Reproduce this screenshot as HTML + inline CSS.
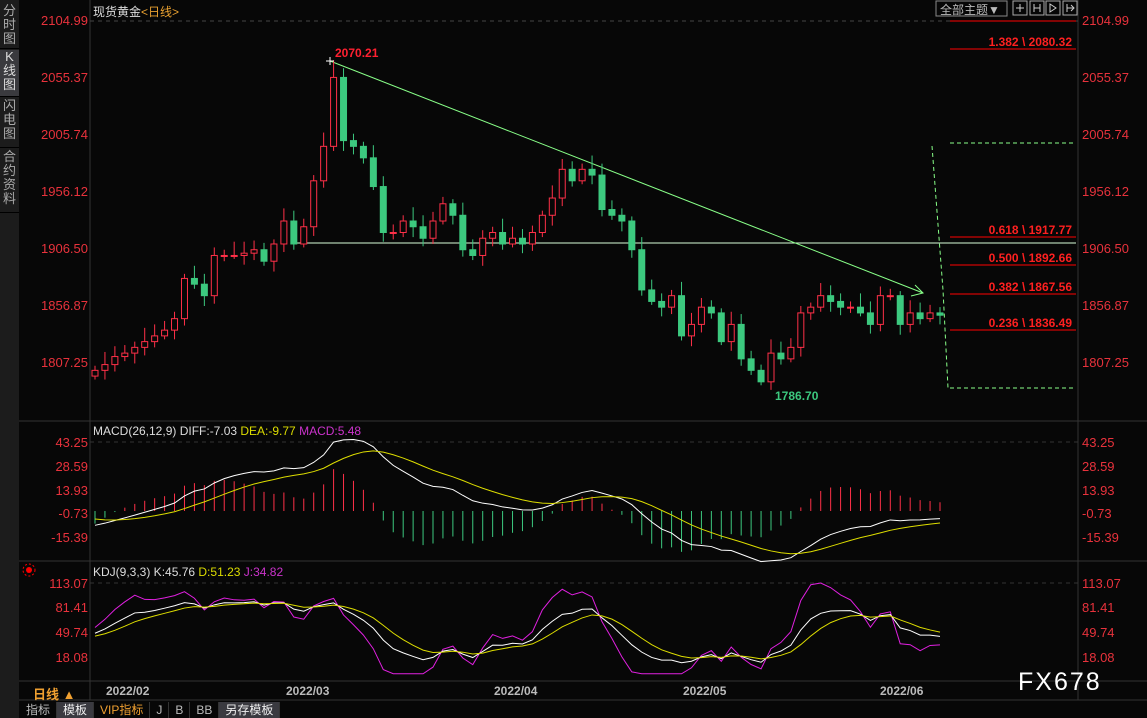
<!DOCTYPE html>
<html><head><meta charset="utf-8"><style>
html,body{margin:0;padding:0;background:#070707;overflow:hidden}
body{width:1147px;height:718px;position:relative;font-family:"Liberation Sans","Noto Sans CJK SC",sans-serif}
.side{position:absolute;left:0;top:0;width:19px;height:718px;background:#1c1c1c}
.side div{position:absolute;left:0;width:19px;color:#aaa;font-size:13px;line-height:14px;text-align:center;border-bottom:1px solid #000}
.t{position:absolute;white-space:nowrap}
.ax{position:absolute;color:#e8323c;font-size:13px;text-align:right;width:68px}
.rax{position:absolute;color:#e8323c;font-size:13px;left:1082px}
.fib{position:absolute;color:#ff2020;font-size:12px;font-weight:bold;right:75px}
.tabs{position:absolute;left:20px;top:702px;height:16px;font-size:12px;color:#bbb}
.tabs span{display:inline-block;height:16px;line-height:16px;padding:0 6px;border-right:1px solid #333}
</style></head><body>
<div class="side">
<div style="top:4px;height:44px">分<br>时<br>图</div>
<div style="top:50px;height:46px;background:#3a3a3e;color:#ddd">K<br>线<br>图</div>
<div style="top:99px;height:48px">闪<br>电<br>图</div>
<div style="top:150px;height:62px">合<br>约<br>资<br>料</div>
</div>
<svg id="s" width="1147" height="718" style="position:absolute;left:0;top:0">
<line x1="90" y1="0" x2="90" y2="700" stroke="#333"/>
<line x1="1078" y1="0" x2="1078" y2="700" stroke="#333"/>
<line x1="19" y1="421" x2="1147" y2="421" stroke="#333"/>
<line x1="19" y1="561" x2="1147" y2="561" stroke="#333"/>
<line x1="19" y1="681" x2="1147" y2="681" stroke="#333"/>
<line x1="19" y1="700" x2="1147" y2="700" stroke="#333"/>
<line x1="90" y1="21" x2="1078" y2="21" stroke="#444" stroke-dasharray="4,4"/>
<line x1="90" y1="442" x2="1078" y2="442" stroke="#333" stroke-dasharray="4,4"/>
<line x1="90" y1="583" x2="1078" y2="583" stroke="#333" stroke-dasharray="4,4"/>
<line x1="950" y1="21" x2="1076" y2="21" stroke="#f00"/>
<line x1="950" y1="49" x2="1076" y2="49" stroke="#f00"/>
<line x1="950" y1="237" x2="1076" y2="237" stroke="#f00"/>
<line x1="950" y1="265" x2="1076" y2="265" stroke="#f00"/>
<line x1="950" y1="294" x2="1076" y2="294" stroke="#f00"/>
<line x1="950" y1="330" x2="1076" y2="330" stroke="#f00"/>
<line x1="950" y1="143" x2="1076" y2="143" stroke="#8f8" stroke-dasharray="4,3"/>
<line x1="950" y1="388" x2="1076" y2="388" stroke="#8f8" stroke-dasharray="4,3"/>
<polyline points="932,146 943,290 948,388" fill="none" stroke="#8f8" stroke-dasharray="4,3"/>
<line x1="293" y1="243" x2="1076" y2="243" stroke="#d8ffd8"/>
<line x1="330" y1="61" x2="923" y2="293" stroke="#8f8"/>
<polyline points="915,285 923,293 911,296" fill="none" stroke="#8f8"/>
<g id="c"></g><g id="m"></g><g id="k"></g>
<line x1="326" y1="61" x2="334" y2="61" stroke="#fff"/><line x1="330" y1="57" x2="330" y2="65" stroke="#fff"/>
<circle cx="29" cy="570" r="3" fill="#f00"/><circle cx="29" cy="570" r="6" fill="none" stroke="#f00" stroke-dasharray="2,2"/>
<rect x="936" y="1" width="71" height="15" fill="none" stroke="#888"/>
<rect x="1013" y="1" width="14" height="14" fill="none" stroke="#aaa"/>
<rect x="1030" y="1" width="14" height="14" fill="none" stroke="#aaa"/>
<rect x="1046" y="1" width="14" height="14" fill="none" stroke="#aaa"/>
<rect x="1063" y="1" width="14" height="14" fill="none" stroke="#aaa"/>
<path d="M1020 4v8M1016 8h8M1034 4v8M1040 4v8M1034 8h6M1050 4v8l6-4z M1067 4v8M1067 8h7M1071 5l3 3-3 3" stroke="#ccc" fill="none"/>
</svg>
<div class="t" style="left:93px;top:3px;font-size:12px;color:#ddd">现货黄金<span style="color:#e8a030">&lt;日线&gt;</span></div>
<div class="t" style="left:940px;top:1px;font-size:12px;color:#bbb">全部主题▼</div>
<div class="ax" style="left:20px;top:13px">2104.99</div>
<div class="ax" style="left:20px;top:70px">2055.37</div>
<div class="ax" style="left:20px;top:127px">2005.74</div>
<div class="ax" style="left:20px;top:184px">1956.12</div>
<div class="ax" style="left:20px;top:241px">1906.50</div>
<div class="ax" style="left:20px;top:298px">1856.87</div>
<div class="ax" style="left:20px;top:355px">1807.25</div>
<div class="rax" style="top:13px">2104.99</div>
<div class="rax" style="top:70px">2055.37</div>
<div class="rax" style="top:127px">2005.74</div>
<div class="rax" style="top:184px">1956.12</div>
<div class="rax" style="top:241px">1906.50</div>
<div class="rax" style="top:298px">1856.87</div>
<div class="rax" style="top:355px">1807.25</div>
<div class="fib" style="top:35px">1.382 \ 2080.32</div>
<div class="fib" style="top:223px">0.618 \ 1917.77</div>
<div class="fib" style="top:251px">0.500 \ 1892.66</div>
<div class="fib" style="top:280px">0.382 \ 1867.56</div>
<div class="fib" style="top:316px">0.236 \ 1836.49</div>
<div class="t" style="left:335px;top:46px;color:#ff2030;font-size:12px;font-weight:bold">2070.21</div>
<div class="t" style="left:775px;top:389px;color:#3cc97f;font-size:12px;font-weight:bold">1786.70</div>
<div class="t" style="left:93px;top:424px;font-size:12px;color:#ddd">MACD(26,12,9) DIFF:-7.03 <span style="color:#dd0">DEA:-9.77</span> <span style="color:#c3c">MACD:5.48</span></div>
<div class="ax" style="left:20px;top:435px">43.25</div><div class="ax" style="left:20px;top:459px">28.59</div><div class="ax" style="left:20px;top:483px">13.93</div><div class="ax" style="left:20px;top:506px">-0.73</div><div class="ax" style="left:20px;top:530px">-15.39</div>
<div class="rax" style="top:435px">43.25</div><div class="rax" style="top:459px">28.59</div><div class="rax" style="top:483px">13.93</div><div class="rax" style="top:506px">-0.73</div><div class="rax" style="top:530px">-15.39</div>
<div class="t" style="left:93px;top:565px;font-size:12px;color:#ddd">KDJ(9,3,3) K:45.76 <span style="color:#dd0">D:51.23</span> <span style="color:#c3c">J:34.82</span></div>
<div class="ax" style="left:20px;top:576px">113.07</div><div class="ax" style="left:20px;top:600px">81.41</div><div class="ax" style="left:20px;top:625px">49.74</div><div class="ax" style="left:20px;top:650px">18.08</div>
<div class="rax" style="top:576px">113.07</div><div class="rax" style="top:600px">81.41</div><div class="rax" style="top:625px">49.74</div><div class="rax" style="top:650px">18.08</div>
<div class="t" style="left:33px;top:684px;color:#f0a030;font-size:13px;font-weight:bold">日线 ▲</div>
<div class="t" style="left:106px;top:684px;color:#bbb;font-size:12px;font-weight:bold">2022/02</div>
<div class="t" style="left:286px;top:684px;color:#bbb;font-size:12px;font-weight:bold">2022/03</div>
<div class="t" style="left:494px;top:684px;color:#bbb;font-size:12px;font-weight:bold">2022/04</div>
<div class="t" style="left:683px;top:684px;color:#bbb;font-size:12px;font-weight:bold">2022/05</div>
<div class="t" style="left:880px;top:684px;color:#bbb;font-size:12px;font-weight:bold">2022/06</div>
<div class="t" style="left:1018px;top:668px;color:#fff;font-size:25px;letter-spacing:2px">FX678</div>
<div class="tabs"><span>指标</span><span style="background:#3a3a40;color:#eee">模板</span><span style="color:#f0a030">VIP指标</span><span>J</span><span>B</span><span>BB</span><span style="background:#3a3a40;color:#eee">另存模板</span></div>
<script>
var cl=[1800,1805,1812,1815,1820,1825,1830,1835,1845,1880,1875,1865,1900,1900,1900,1902,1905,1895,1910,1930,1910,1925,1965,1995,2055,2000,1995,1985,1960,1920,1920,1930,1925,1915,1930,1945,1935,1905,1900,1915,1920,1910,1915,1910,1920,1935,1950,1975,1965,1975,1970,1940,1935,1930,1905,1870,1860,1855,1865,1830,1840,1855,1850,1825,1840,1810,1800,1790,1815,1810,1820,1850,1855,1865,1860,1855,1855,1850,1840,1865,1865,1840,1850,1845,1850,1848];
var N=cl.length,x0=95,dx=(940-95)/(N-1);
function py(p){return 20+(2104.99-p)*1.1487}
var ns="http://www.w3.org/2000/svg";
function el(g,t,a){var e=document.createElementNS(ns,t);for(var k in a)e.setAttribute(k,a[k]);document.getElementById(g).appendChild(e)}
var hi=[],lo=[];
for(var i=0;i<N;i++){var o=i?cl[i-1]:1795,c=cl[i];if(i==24)o=1995;var h=Math.max(o,c)+4+((i*7)%9),l=Math.min(o,c)-3-((i*5)%7);
if(i==24)h=2070;if(i==67)l=1787;hi.push(h);lo.push(l);
var x=x0+i*dx,up=c>=o,col=up?"#ff3048":"#3cc97f";
el("c","line",{x1:x,x2:x,y1:py(h),y2:py(l),stroke:col});
var y1=py(Math.max(o,c)),y2=py(Math.min(o,c));if(y2-y1<1)y2=y1+1;
el("c","rect",{x:x-3,y:y1,width:6,height:y2-y1,fill:up?"#070707":col,stroke:col});}
function ema(a,n,s){var r=[],k=2/(n+1);a.forEach(function(v,i){r.push(i?r[i-1]+k*(v-r[i-1]):s+k*(v-s))});return r}
var e12=ema(cl,12,1796),e26=ema(cl,26,1806),dif=cl.map(function(v,i){return e12[i]-e26[i]}),dea=ema(dif,9,-4);
function my(v){return 511-v*1.6}
var dp="",dp2="";for(i=0;i<N;i++){var x=x0+i*dx;dp+=x+","+my(dif[i])+" ";dp2+=x+","+my(dea[i])+" ";
var h=2*(dif[i]-dea[i]);el("m","line",{x1:x,x2:x,y1:511,y2:my(h),stroke:h>=0?"#ff3048":"#3cc97f"});}
el("m","polyline",{points:dp,fill:"none",stroke:"#fff"});el("m","polyline",{points:dp2,fill:"none",stroke:"#dd0"});
var K=32,D=42,kp="",dpp="",jp="";function ky(v){return 656-(v-18.08)*0.769}
for(i=0;i<N;i++){var a=Math.max(0,i-8),H=-1e9,L=1e9;for(var j=a;j<=i;j++){H=Math.max(H,hi[j]);L=Math.min(L,lo[j]);}
if(i<8){L=Math.min(L,1785);}
var rsv=(cl[i]-L)/(H-L)*100;K=(2*K+rsv)/3;D=(2*D+K)/3;var J=3*K-2*D;var x=x0+i*dx;
kp+=x+","+ky(K)+" ";dpp+=x+","+ky(D)+" ";jp+=x+","+ky(Math.max(-5,Math.min(120,J)))+" ";}
el("k","polyline",{points:jp,fill:"none",stroke:"#e020e0"});el("k","polyline",{points:kp,fill:"none",stroke:"#fff"});el("k","polyline",{points:dpp,fill:"none",stroke:"#dd0"});
</script>
</body></html>
